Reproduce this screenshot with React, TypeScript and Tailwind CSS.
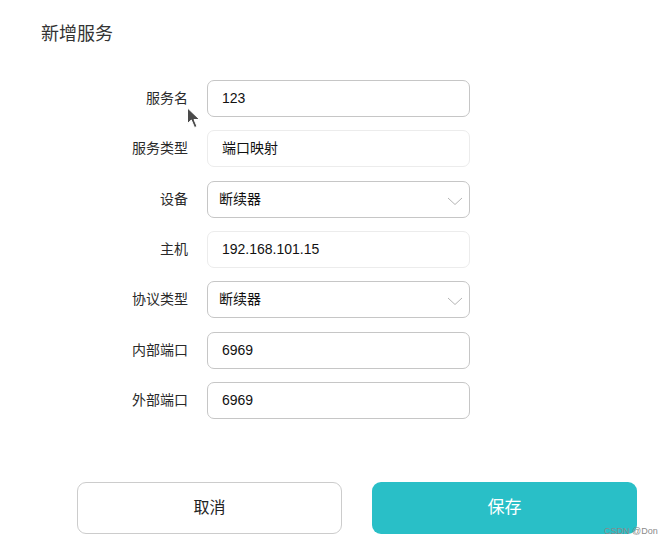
import React from "react";

const font = { fontFamily: '"Liberation Sans", "Noto Sans CJK SC", sans-serif' };

function Chevron() {
  return (
    <svg width="16" height="9" viewBox="0 0 16 9" className="absolute right-[6px] top-[15px]">
      <path d="M1 1 L8 7.5 L15 1" fill="none" stroke="#b5b5b5" strokeWidth="1" />
    </svg>
  );
}

function Row({ label, value, kind }: { label: string; value: string; kind: "input" | "disabled" | "select" }) {
  const border =
    kind === "disabled" ? "border-[#ececec]" : "border-[#c6c6c6]";
  return (
    <div className="flex items-center h-[37px]">
      <div className="w-[188px] text-right text-[14px] text-[#2a2a2a]">{label}</div>
      <div
        className={`relative ml-[19px] w-[263px] h-[37px] rounded-[7px] border ${border} bg-white flex items-center ${
          kind === "select" ? "pl-[11px]" : "pl-[14px]"
        } text-[14px] text-[#111]`}
      >
        {value}
        {kind === "select" && <Chevron />}
      </div>
    </div>
  );
}

export default function App() {
  return (
    <div className="relative w-[670px] h-[545px] bg-white overflow-hidden" style={font}>
      <div className="pt-[23px] pl-[41px] text-[18px] text-[#333] leading-[22px]">新增服务</div>
      <div className="mt-[35px] flex flex-col gap-[13.33px]">
        <Row label="服务名" value="123" kind="input" />
        <Row label="服务类型" value="端口映射" kind="disabled" />
        <Row label="设备" value="断续器" kind="select" />
        <Row label="主机" value="192.168.101.15" kind="disabled" />
        <Row label="协议类型" value="断续器" kind="select" />
        <Row label="内部端口" value="6969" kind="input" />
        <Row label="外部端口" value="6969" kind="input" />
      </div>
      <div className="mt-[63px] flex pl-[77px] gap-[30px]">
        <div className="w-[265px] h-[52px] rounded-[9px] border border-[#cccccc] flex items-center justify-center text-[16px] text-[#222]">
          取消
        </div>
        <div className="w-[265px] h-[52px] rounded-[9px] bg-[#29bfc7] flex items-center justify-center text-[17px] text-white">
          保存
        </div>
      </div>
      <div className="absolute left-[604px] top-[526px] text-[9px] text-[#8a8a8a] leading-[10px]">CSDN @Don</div>
      <svg className="absolute left-[186px] top-[107px]" width="16" height="23" viewBox="0 0 16 23">
        <path d="M1.5 1 L1.5 16.5 L5.3 13 L8.5 20.5 L11 19.5 L8 12.5 L13.5 12.5 Z" fill="#4a4a4a" stroke="#fff" strokeWidth="1" strokeLinejoin="round" />
      </svg>
    </div>
  );
}
